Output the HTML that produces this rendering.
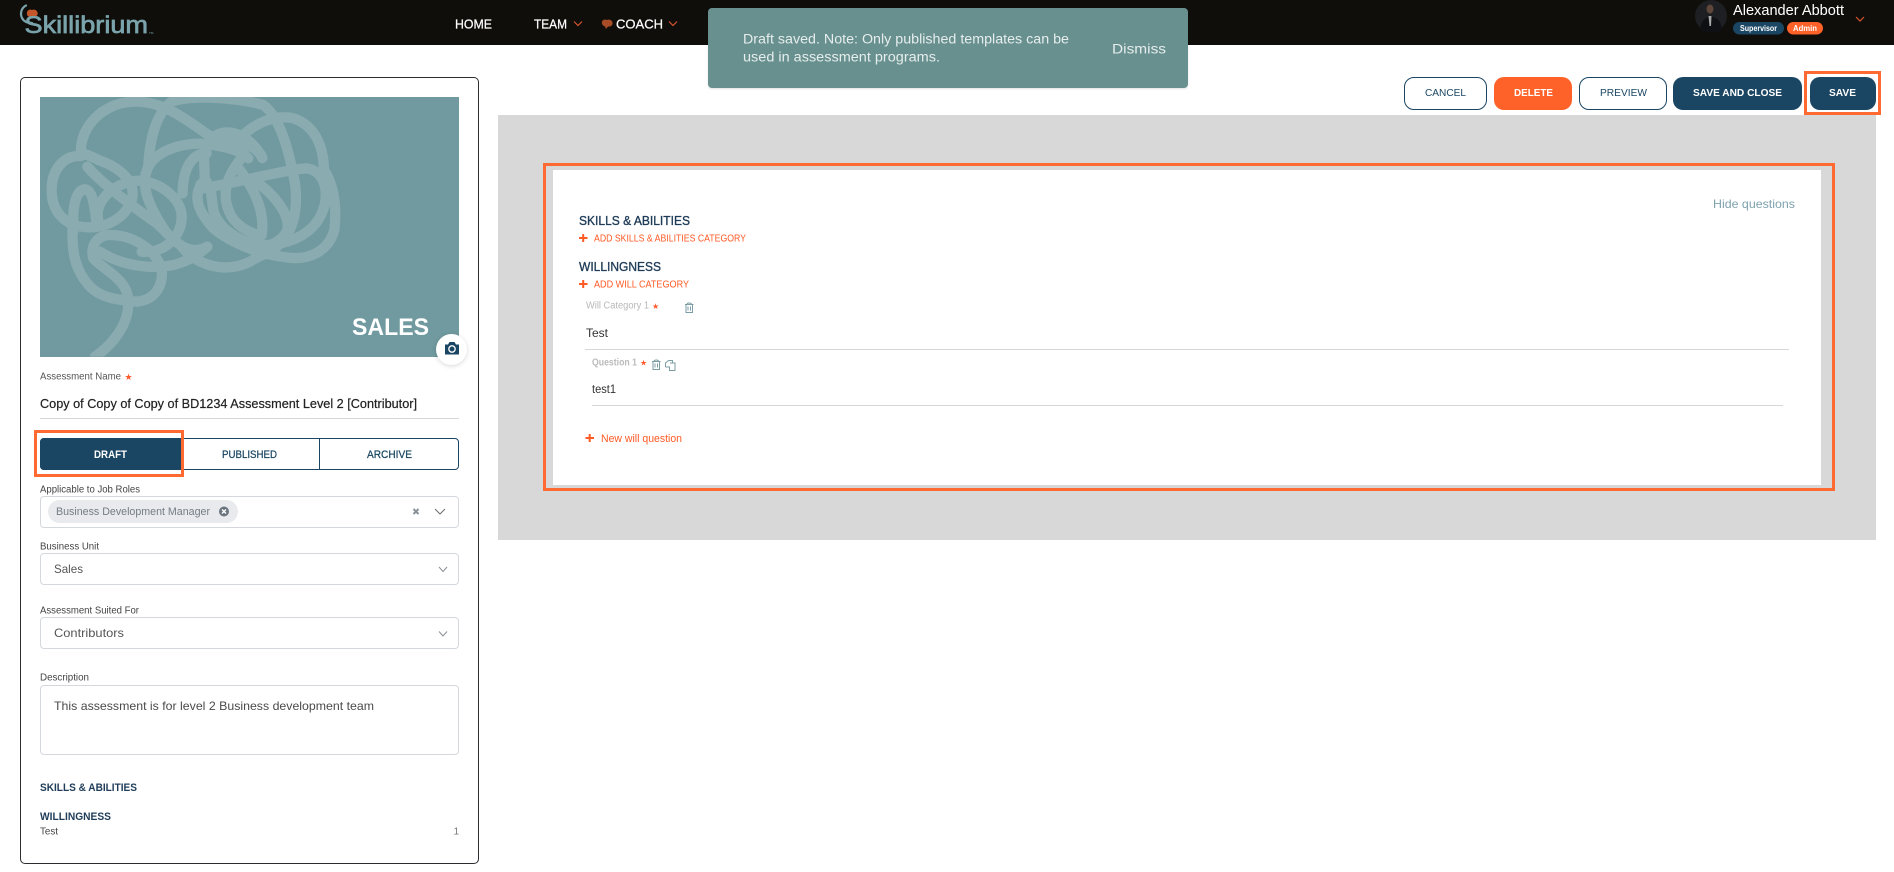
<!DOCTYPE html>
<html lang="en">
<head>
<meta charset="utf-8">
<title>Skillibrium</title>
<style>
html,body{margin:0;padding:0;background:#fff;width:1894px;height:872px;overflow:hidden;font-family:"Liberation Sans",sans-serif}
.b{position:absolute;box-sizing:border-box}
svg{position:absolute;left:0;top:0}
text{font-family:"Liberation Sans",sans-serif;white-space:pre}
.btn{border-radius:10px;height:33px;top:77px}
.field{left:40px;width:419px;height:32px;border:1px solid #d4d8dc;border-radius:4px;background:#fff}
</style>
</head>
<body>
<!-- header -->
<div class="b" style="left:0;top:0;width:1894px;height:45px;background:#0f0e0b"></div>

<!-- left card -->
<div class="b" style="left:20px;top:77px;width:459px;height:787px;border:1px solid #2b2d30;border-radius:5px;background:#fff"></div>
<div class="b" style="left:40px;top:97px;width:419px;height:260px;background:#709a9f"></div>
<svg width="490" height="300" viewBox="0 0 1470 900" style="left:0;top:70px">
<defs><clipPath id="c"><rect x="120" y="81" width="1257" height="779"/></clipPath></defs>
<g clip-path="url(#c)" fill="none" stroke="#8aabb0" stroke-width="31" stroke-linecap="round" stroke-linejoin="round">
<path d="M243 250C238 170 310 98 400 95C490 92 560 150 625 195C680 215 770 215 787 264"/>
<path d="M445 285C450 200 470 130 515 95C580 72 720 85 790 105C845 145 870 260 885 340C895 420 880 490 830 530"/>
<path d="M735 190C780 150 840 135 880 145C940 165 970 220 972 300C1005 350 1010 420 1003 480C985 545 925 572 860 562C790 555 700 525 640 475C600 430 580 390 600 350C600 340 610 335 620 335"/>
<path d="M445 290C470 240 560 210 640 225C680 232 720 240 745 265"/>
<path d="M548 370C548 290 580 250 620 250"/>
<path d="M612 260L615 345"/>
<path d="M610 355C700 340 850 300 920 295C960 300 985 340 975 400C960 470 900 520 800 525C720 525 650 470 640 420L632 360"/>
<path d="M720 270C680 320 660 380 695 440C720 480 770 495 785 495C795 430 770 370 720 300"/>
<path d="M775 340C835 385 870 440 862 480C850 510 810 528 795 530"/>
<path d="M650 195C700 170 760 210 787 264"/>
<path d="M243 258C190 255 155 300 155 360C155 430 200 472 270 472C340 472 398 420 398 370C398 320 340 285 300 272C280 262 260 252 243 250"/>
<path d="M262 290C310 345 400 410 470 460C520 505 560 565 622 530"/>
<path d="M295 450C280 390 350 332 420 332C490 340 545 390 545 440C545 500 495 550 425 545"/>
<path d="M445 290C420 340 440 400 500 490"/>
<path d="M222 480C215 420 225 360 255 358C280 360 285 420 290 465"/>
<path d="M218 470C215 550 225 600 270 650C310 690 370 690 410 695C470 690 490 640 485 600C470 540 400 495 330 495C290 495 270 530 280 565C310 600 390 630 385 700C385 770 330 830 285 860"/>
<path d="M300 545C360 585 450 600 520 585C580 570 610 540 622 530"/>
<path d="M545 530C595 590 680 610 750 575C780 555 800 550 815 545"/>
</g>
</svg>
<div class="b" style="left:436px;top:333.500px;width:31px;height:31px;border-radius:50%;background:#fff;box-shadow:0 1px 5px rgba(0,0,0,.16)"></div>
<div class="b" style="left:40px;top:418px;width:419px;height:1px;background:#d6d6d6"></div>

<!-- status tabs -->
<div class="b" style="left:40px;top:438px;width:419px;height:32px;border:1px solid #1a4663;border-radius:4px;background:#fff"></div>
<div class="b" style="left:40px;top:438px;width:141px;height:32px;background:#1a4663;border-radius:4px 0 0 4px"></div>
<div class="b" style="left:319px;top:438px;width:1px;height:32px;background:#1a4663"></div>
<div class="b" style="left:34px;top:430px;width:150px;height:47px;border:3px solid #ff6a33"></div>

<!-- fields -->
<div class="b field" style="top:496px"></div>
<div class="b" style="left:48px;top:500px;width:190px;height:23px;border-radius:12px;background:#e8eaed"></div>
<div class="b field" style="top:553px"></div>
<div class="b field" style="top:617px"></div>
<div class="b" style="left:40px;top:685px;width:419px;height:70px;border:1px solid #d4d8dc;border-radius:4px"></div>

<!-- toast -->
<div class="b" style="left:708px;top:8px;width:480px;height:80px;background:#68908f;border-radius:4px;box-shadow:0 1px 2px rgba(0,0,0,.12)"></div>

<!-- action buttons -->
<div class="b btn" style="left:1404px;width:83px;background:#fff;border:1px solid #1a4663"></div>
<div class="b btn" style="left:1494px;width:78px;background:#ff6228"></div>
<div class="b btn" style="left:1579px;width:88px;background:#fff;border:1px solid #1a4663"></div>
<div class="b btn" style="left:1673px;width:129px;background:#1a4663"></div>
<div class="b btn" style="left:1810px;width:66px;background:#1a4663"></div>
<div class="b" style="left:1804px;top:71px;width:77px;height:44px;border:3px solid #ff6a33"></div>

<!-- canvas -->
<div class="b" style="left:498px;top:115px;width:1378px;height:425px;background:#d8d8d8"></div>
<div class="b" style="left:543px;top:163px;width:1292px;height:328px;border:3px solid #ff6a33"></div>
<div class="b" style="left:553px;top:170px;width:1268px;height:315px;background:#fff"></div>
<div class="b" style="left:585px;top:349px;width:1204px;height:1px;background:#d6d6d6"></div>
<div class="b" style="left:592px;top:405px;width:1191px;height:1px;background:#d6d6d6"></div>

<svg width="1894" height="872" viewBox="0 0 1894 872">
<!-- logo -->
<path d="M26 5.500C21 8 20 14 22 18C24 22 28 23 32 23" fill="none" stroke="#7aa3ab" stroke-width="2.200" stroke-linecap="round"/>
<path d="M27 13C27 10 30 9 32 10C34 9 37 10 37.500 12.500C38.500 15 36 17 33.500 16.500L32 19L30.500 17C28 17 26.500 15 27 13Z" fill="#c4562a"/>
<text x="24.500" y="33" font-size="24" fill="#7aa3ab" stroke="#7aa3ab" stroke-width=".7" textLength="123.500" lengthAdjust="spacingAndGlyphs">Skillibrium</text>
<text x="149" y="34" font-size="3" fill="#7aa3ab">TM</text>

<!-- nav -->
<g fill="#fff" stroke="#fff" stroke-width=".25" font-size="13">
<text x="455" y="28.500" textLength="37" lengthAdjust="spacingAndGlyphs">HOME</text>
<text x="534" y="28.500" textLength="33" lengthAdjust="spacingAndGlyphs">TEAM</text>
<text x="616" y="28.500" textLength="47" lengthAdjust="spacingAndGlyphs">COACH</text>
</g>
<g fill="none" stroke="#d9542a" stroke-width="1.200">
<path d="M574 21.500L578 25.500L582 21.500"/>
<path d="M669 21.500L673 25.500L677 21.500"/>
<path d="M1856 17L1860 21L1864 17"/>
</g>
<path d="M602 22C602 20 605 19 607 20C609 19 612 20 612.500 22.500C613 25 611 27 608 26.500L606 29L605 26.500C603 26 601.500 24 602 22Z" fill="#a84c28"/>

<!-- user -->
<circle cx="1711" cy="16" r="16" fill="#1e1f22"/>
<path d="M1700 30C1701 20 1706 17 1711 17C1716 17 1721 20 1722 30C1716 33 1706 33 1700 30Z" fill="#0e1014"/>
<ellipse cx="1710" cy="9" rx="3.500" ry="4.500" fill="#5f463a"/>
<path d="M1708.500 16L1711.500 16L1711 26L1709.500 26Z" fill="#a9a9a9"/>
<text x="1733" y="15" font-size="14.500" fill="#fff" textLength="111" lengthAdjust="spacingAndGlyphs">Alexander Abbott</text>
<rect x="1733" y="22" width="51" height="12.500" rx="6.200" fill="#1a4663"/>
<rect x="1787" y="22" width="36" height="12.500" rx="6.200" fill="#ff6228"/>
<text x="1740" y="31" font-size="8" font-weight="700" fill="#fff" textLength="37" lengthAdjust="spacingAndGlyphs">Supervisor</text>
<text x="1793" y="31" font-size="8" font-weight="700" fill="#fff" textLength="24" lengthAdjust="spacingAndGlyphs">Admin</text>

<!-- toast text -->
<g fill="#e6eeed">
<text x="743" y="43.500" font-size="13.500" textLength="326" lengthAdjust="spacingAndGlyphs">Draft saved. Note: Only published templates can be</text>
<text x="743" y="61.500" font-size="13.500" textLength="197" lengthAdjust="spacingAndGlyphs">used in assessment programs.</text>
<text x="1112" y="53.500" font-size="14" textLength="54" lengthAdjust="spacingAndGlyphs">Dismiss</text>
</g>

<!-- button text -->
<text x="1425" y="96" font-size="10.500" fill="#1a4663" textLength="41" lengthAdjust="spacingAndGlyphs">CANCEL</text>
<text x="1514" y="96" font-size="10.500" font-weight="700" fill="#fff" textLength="39" lengthAdjust="spacingAndGlyphs">DELETE</text>
<text x="1600" y="96" font-size="10.500" fill="#1a4663" textLength="47" lengthAdjust="spacingAndGlyphs">PREVIEW</text>
<text x="1693" y="96" font-size="10.500" font-weight="700" fill="#fff" textLength="89" lengthAdjust="spacingAndGlyphs">SAVE AND CLOSE</text>
<text x="1829" y="96" font-size="10.500" font-weight="700" fill="#fff" textLength="27" lengthAdjust="spacingAndGlyphs">SAVE</text>

<!-- image text & camera -->
<text x="352" y="335" font-size="24.500" font-weight="700" fill="#fff" textLength="77" lengthAdjust="spacingAndGlyphs">SALES</text>
<path d="M445 344.500H448L449.500 342H454.500L456 344.500H459V354.500H445Z" fill="#1a4663"/>
<circle cx="452" cy="349" r="3.200" fill="none" stroke="#fff" stroke-width="1.300"/>

<!-- left form text -->
<text x="40" y="379.500" font-size="10" fill="#555" textLength="81" lengthAdjust="spacingAndGlyphs">Assessment Name</text>
<text x="124.500" y="380" font-size="9" fill="#ff5a2a">★</text>
<text x="40" y="408" font-size="13" fill="#222" stroke="#222" stroke-width=".2" textLength="377" lengthAdjust="spacingAndGlyphs">Copy of Copy of Copy of BD1234 Assessment Level 2 [Contributor]</text>
<text x="94" y="458" font-size="11" font-weight="700" fill="#fff" textLength="33" lengthAdjust="spacingAndGlyphs">DRAFT</text>
<text x="222" y="458" font-size="11" fill="#1a4663" stroke="#1a4663" stroke-width=".25" textLength="55" lengthAdjust="spacingAndGlyphs">PUBLISHED</text>
<text x="367" y="458" font-size="11" fill="#1a4663" stroke="#1a4663" stroke-width=".25" textLength="45" lengthAdjust="spacingAndGlyphs">ARCHIVE</text>

<g font-size="10" fill="#444">
<text x="40" y="492.500" textLength="100" lengthAdjust="spacingAndGlyphs">Applicable to Job Roles</text>
<text x="40" y="549.500" textLength="59" lengthAdjust="spacingAndGlyphs">Business Unit</text>
<text x="40" y="613.500" textLength="99" lengthAdjust="spacingAndGlyphs">Assessment Suited For</text>
<text x="40" y="680.500" textLength="49" lengthAdjust="spacingAndGlyphs">Description</text>
</g>
<text x="56" y="515" font-size="11" fill="#757c85" textLength="154" lengthAdjust="spacingAndGlyphs">Business Development Manager</text>
<circle cx="224" cy="511.500" r="5" fill="#6b7580"/>
<path d="M222 509.500L226 513.500M226 509.500L222 513.500" stroke="#fff" stroke-width="1.400"/>
<path d="M413.500 509L418.500 514M418.500 509L413.500 514" stroke="#8a9198" stroke-width="2"/>
<g fill="none" stroke="#6a6f75" stroke-width="1">
<path d="M435 509L440 514L445 509"/>
</g>
<g fill="none" stroke="#8a8f94" stroke-width="1">
<path d="M439 567L443 571.500L447 567"/>
<path d="M439 631.500L443 636L447 631.500"/>
</g>
<text x="54" y="573" font-size="12" fill="#555" textLength="29" lengthAdjust="spacingAndGlyphs">Sales</text>
<text x="54" y="637" font-size="12" fill="#555" textLength="70" lengthAdjust="spacingAndGlyphs">Contributors</text>
<text x="54" y="710" font-size="12" fill="#4a4a4a" textLength="320" lengthAdjust="spacingAndGlyphs">This assessment is for level 2 Business development team</text>
<text x="40" y="791" font-size="11" font-weight="700" fill="#1f3c58" textLength="97" lengthAdjust="spacingAndGlyphs">SKILLS &amp; ABILITIES</text>
<text x="40" y="820" font-size="11" font-weight="700" fill="#1f3c58" textLength="71" lengthAdjust="spacingAndGlyphs">WILLINGNESS</text>
<text x="40" y="834.500" font-size="10" fill="#444" textLength="18" lengthAdjust="spacingAndGlyphs">Test</text>
<text x="453.500" y="834.500" font-size="10" fill="#777">1</text>

<!-- right panel text -->
<text x="1713" y="208" font-size="12" fill="#7ea2ad" textLength="82" lengthAdjust="spacingAndGlyphs">Hide questions</text>
<text x="579" y="225" font-size="13" fill="#1f3c58" stroke="#1f3c58" stroke-width=".35" textLength="111" lengthAdjust="spacingAndGlyphs">SKILLS &amp; ABILITIES</text>
<text x="579" y="271" font-size="13" fill="#1f3c58" stroke="#1f3c58" stroke-width=".35" textLength="82" lengthAdjust="spacingAndGlyphs">WILLINGNESS</text>
<g stroke="#ff5a24" stroke-width="2" fill="none">
<path d="M579 238H587.500M583.200 234V242"/>
<path d="M579 284H587.500M583.200 280V288"/>
<path d="M585.500 438H594M589.700 434V442"/>
</g>
<text x="594" y="241.500" font-size="10" fill="#ff5a24" textLength="152" lengthAdjust="spacingAndGlyphs">ADD SKILLS &amp; ABILITIES CATEGORY</text>
<text x="594" y="287.500" font-size="10" fill="#ff5a24" textLength="95" lengthAdjust="spacingAndGlyphs">ADD WILL CATEGORY</text>
<text x="586" y="308.500" font-size="10" fill="#b8b8b8" textLength="63" lengthAdjust="spacingAndGlyphs">Will Category 1</text>
<text x="652" y="309" font-size="8" fill="#ff5a2a">★</text>
<text x="586" y="337" font-size="12" fill="#333" textLength="22" lengthAdjust="spacingAndGlyphs">Test</text>
<text x="592" y="365.500" font-size="10" font-weight="700" fill="#bbb" textLength="45" lengthAdjust="spacingAndGlyphs">Question 1</text>
<text x="640" y="365.500" font-size="8" fill="#ff5a2a">★</text>
<text x="592" y="393" font-size="12" fill="#333" textLength="24" lengthAdjust="spacingAndGlyphs">test1</text>
<text x="601" y="442" font-size="11" fill="#ff5a24" textLength="81" lengthAdjust="spacingAndGlyphs">New will question</text>

<!-- icons -->
<g fill="none" stroke="#7a9ea3" stroke-width="1">
<path d="M685 304.500H693.500M687 304.500C687 302.500 691.500 302.500 691.500 304.500M686 304.500V312.500H692.500V304.500M688 306.500V310.500M690.500 306.500V310.500"/>
<path d="M652 361.500H660.500M654 361.500C654 359.500 658.500 359.500 658.500 361.500M653 361.500V369.500H659.500V361.500M655 363.500V367.500M657.500 363.500V367.500"/>
<path d="M665.500 367V363L668.500 360.500H672.500V362.500M670 363H675V370.500H669.500V367H665.500"/>
</g>
</svg>
</body>
</html>
